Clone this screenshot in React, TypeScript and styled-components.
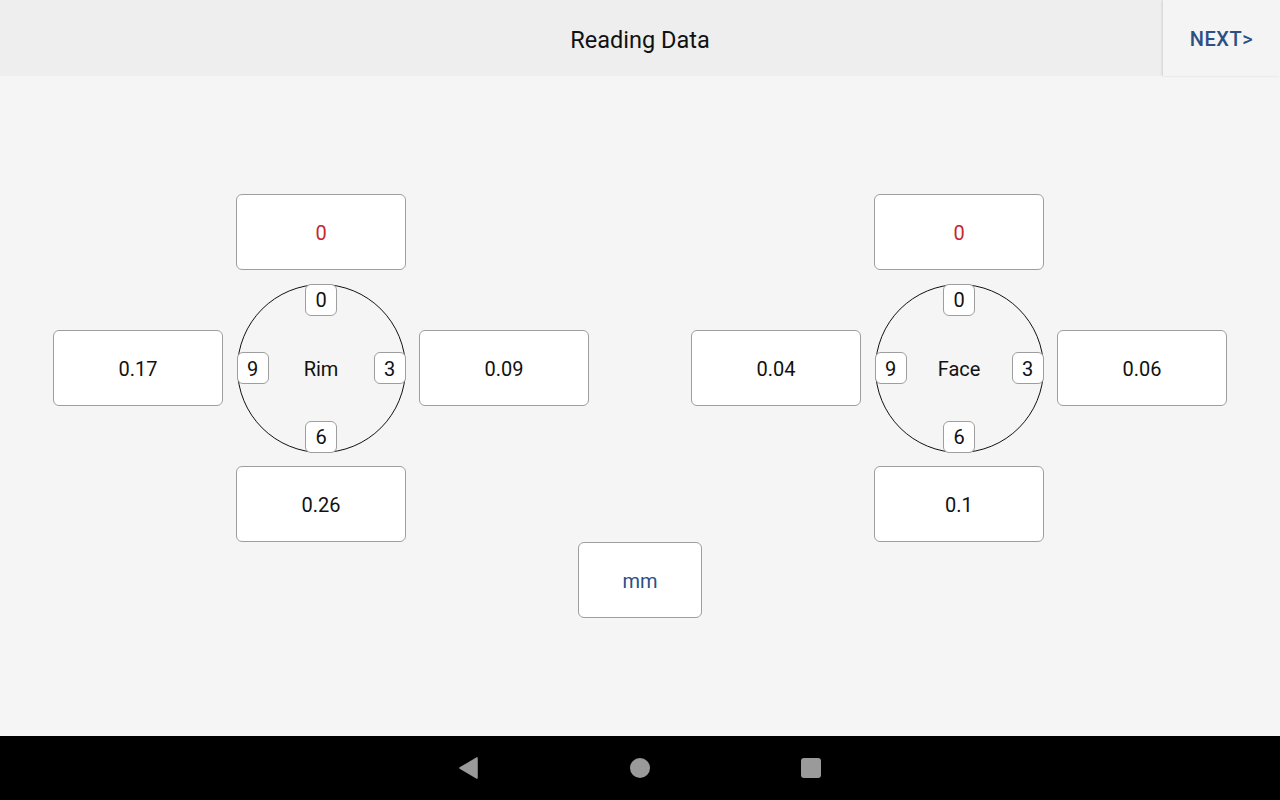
import styled, { createGlobalStyle } from "styled-components";

const GlobalStyle = createGlobalStyle`
    html, body {
        margin: 0;
        padding: 0;
        background: #f5f5f5;
        font-family: Roboto, "Noto Sans", sans-serif;
    }
`;

const Screen = styled.div`
    width: 1280px;
    height: 800px;
    display: flex;
    flex-direction: column;
    background: #f5f5f5;
    overflow: hidden;
`;

const Header = styled.div`
    height: 76px;
    flex-shrink: 0;
    display: flex;
    align-items: center;
    justify-content: center;
    position: relative;
    background: #eeeeee;
`;

const Title = styled.div`
    font-size: 23.5px;
    color: #111;
    padding-top: 3px;
`;

const NextButton = styled.div`
    position: absolute;
    right: 0;
    top: 0;
    width: 117px;
    height: 76px;
    display: flex;
    align-items: center;
    justify-content: center;
    background: #f4f4f4;
    box-shadow: -1px 0 2px rgba(0, 0, 0, 0.12);
    color: #2c4f85;
    font-size: 20px;
    font-weight: 500;
    letter-spacing: 0.6px;
    padding-top: 2px;
    box-sizing: border-box;
`;

const Body = styled.div`
    flex: 1;
    display: flex;
    flex-direction: column;
    align-items: center;
    padding-top: 118px;
`;

const Groups = styled.div`
    display: flex;
    gap: 102px;
`;

const Group = styled.div`
    display: grid;
    grid-template-columns: 170px 170px 170px;
    grid-template-rows: 76px 168px 76px;
    column-gap: 13px;
    row-gap: 14px;
    align-items: center;
    justify-items: center;
`;

const ValueBox = styled.div<{ $color?: string; $width?: number }>`
    box-sizing: border-box;
    width: ${(p) => p.$width ?? 170}px;
    height: 76px;
    display: flex;
    align-items: center;
    justify-content: center;
    padding-top: 2px;
    background: #fff;
    border: 1px solid #9e9e9e;
    border-radius: 6px;
    font-size: 20px;
    color: ${(p) => p.$color ?? "#111"};
`;

const Dial = styled.div`
    box-sizing: border-box;
    position: relative;
    width: 169px;
    height: 169px;
    border-radius: 50%;
    border: 1px solid #111;
    display: flex;
    align-items: center;
    justify-content: center;
    padding-top: 2px;
    font-size: 20px;
    color: #111;
`;

const Mark = styled.div<{ $pos: "top" | "right" | "bottom" | "left" }>`
    position: absolute;
    box-sizing: border-box;
    width: 32px;
    height: 32px;
    display: flex;
    align-items: center;
    justify-content: center;
    padding-top: 1px;
    background: #fff;
    border: 1px solid #9e9e9e;
    border-radius: 6px;
    font-size: 20px;
    ${(p) =>
        p.$pos === "top"
            ? "top: -1px; left: 50%; transform: translateX(-50%);"
            : p.$pos === "bottom"
            ? "bottom: -1px; left: 50%; transform: translateX(-50%);"
            : p.$pos === "left"
            ? "left: -1px; top: 50%; transform: translateY(-50%);"
            : "right: -1px; top: 50%; transform: translateY(-50%);"}
`;

const UnitBox = styled(ValueBox)`
    color: #2c4f85;
`;

const NavBar = styled.div`
    height: 64px;
    flex-shrink: 0;
    background: #000;
    display: flex;
    align-items: center;
    justify-content: center;
`;

const NavSlot = styled.div`
    width: 171px;
    display: flex;
    justify-content: center;
`;

type GroupProps = {
    label: string;
    top: string;
    left: string;
    right: string;
    bottom: string;
};

const Reading = ({ label, top, left, right, bottom }: GroupProps) => (
    <Group>
        <span />
        <ValueBox $color="#c62828">{top}</ValueBox>
        <span />
        <ValueBox>{left}</ValueBox>
        <Dial>
            {label}
            <Mark $pos="top">0</Mark>
            <Mark $pos="right">3</Mark>
            <Mark $pos="bottom">6</Mark>
            <Mark $pos="left">9</Mark>
        </Dial>
        <ValueBox>{right}</ValueBox>
        <span />
        <ValueBox>{bottom}</ValueBox>
        <span />
    </Group>
);

const App = () => (
    <>
        <GlobalStyle />
        <Screen>
            <Header>
                <Title>Reading Data</Title>
                <NextButton>NEXT&gt;</NextButton>
            </Header>
            <Body>
                <Groups>
                    <Reading label="Rim" top="0" left="0.17" right="0.09" bottom="0.26" />
                    <Reading label="Face" top="0" left="0.04" right="0.06" bottom="0.1" />
                </Groups>
                <UnitBox $width={124}>mm</UnitBox>
            </Body>
            <NavBar>
                <NavSlot>
                    <svg width="20" height="22" viewBox="0 0 20 22">
                        <path d="M18 1 L18 21 L1 11 Z" fill="#9a9a9a" stroke="#9a9a9a" strokeWidth="1.5" strokeLinejoin="round" />
                    </svg>
                </NavSlot>
                <NavSlot>
                    <svg width="22" height="22" viewBox="0 0 22 22">
                        <circle cx="11" cy="11" r="10" fill="#9a9a9a" />
                    </svg>
                </NavSlot>
                <NavSlot>
                    <svg width="22" height="22" viewBox="0 0 22 22">
                        <rect x="1" y="1" width="20" height="20" rx="3" fill="#9a9a9a" />
                    </svg>
                </NavSlot>
            </NavBar>
        </Screen>
    </>
);

export default App;
